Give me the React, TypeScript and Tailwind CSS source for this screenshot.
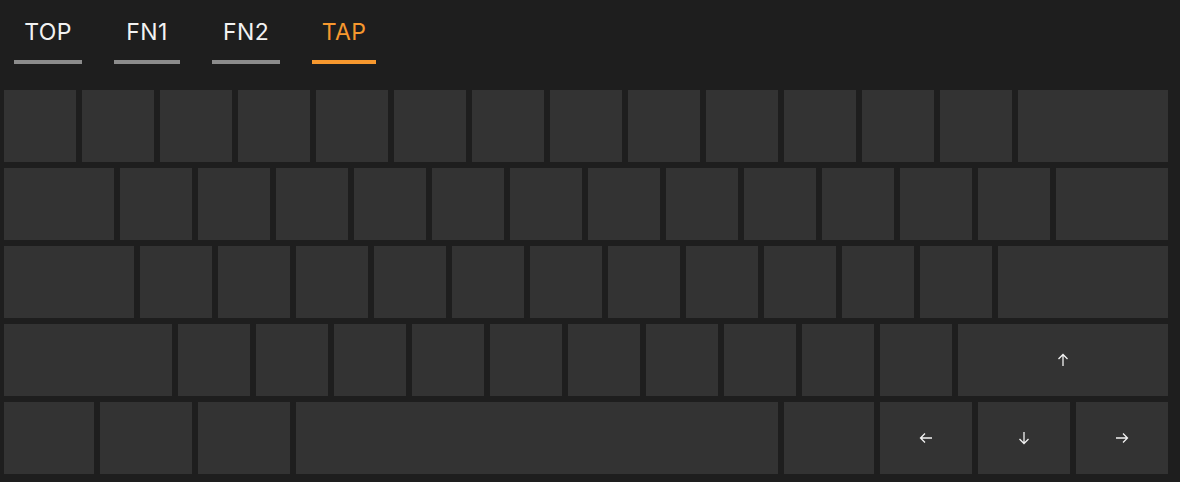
import React from "react"

type Key = { w: number; icon?: "up" | "down" | "left" | "right" }

const rows: Key[][] = [
    [...Array(13).fill({ w: 72 }), { w: 150 }],
    [{ w: 110 }, ...Array(12).fill({ w: 72 }), { w: 112 }],
    [{ w: 130 }, ...Array(11).fill({ w: 72 }), { w: 170 }],
    [{ w: 168 }, ...Array(10).fill({ w: 72 }), { w: 210, icon: "up" }],
    [
        { w: 90 },
        { w: 92 },
        { w: 92 },
        { w: 482 },
        { w: 90 },
        { w: 92, icon: "left" },
        { w: 92, icon: "down" },
        { w: 92, icon: "right" },
    ],
]

const tabs = [
    { label: "TOP", w: 68, active: false },
    { label: "FN1", w: 66, active: false },
    { label: "FN2", w: 68, active: false },
    { label: "TAP", w: 64, active: true },
]

function Arrow({ dir }: { dir: "up" | "down" | "left" | "right" }) {
    const rot = { up: 0, right: 90, down: 180, left: 270 }[dir]
    return (
        <svg width="14" height="14" viewBox="0 0 14 14" style={{ transform: `rotate(${rot}deg)` }}>
            <path d="M7 13V1.5M2.5 6L7 1.5L11.5 6" fill="none" stroke="#f2f2f2" strokeWidth="1.3" />
        </svg>
    )
}

export default function App() {
    return (
        <div className="w-[1180px] h-[482px] bg-[#1e1e1e] overflow-hidden" style={{ fontFamily: "Inter, 'Noto Sans', sans-serif" }}>
            {/* Tabs */}
            <div className="h-[84px] flex gap-[32px] pl-[14px]">
                {tabs.map((t) => (
                    <div key={t.label} className="flex flex-col items-center" style={{ width: t.w }}>
                        <div
                            className={`mt-[18px] h-[28px] leading-[28px] text-[23px] tracking-[0.4px] ${t.active ? "text-[#f7982e]" : "text-[#f2f2f2]"}`}
                        >
                            {t.label}
                        </div>
                        <div className={`mt-[14px] h-[4px] w-full ${t.active ? "bg-[#f7982e]" : "bg-[#8c8c8c]"}`} />
                    </div>
                ))}
            </div>

            {/* Keyboard */}
            <div className="flex flex-col gap-[6px] px-[4px] pt-[6px]">
                {rows.map((row, i) => (
                    <div key={i} className="flex gap-[6px]">
                        {row.map((k, j) => (
                            <div
                                key={j}
                                className="h-[72px] bg-[#333333] flex items-center justify-center"
                                style={{ width: k.w }}
                            >
                                {k.icon && <Arrow dir={k.icon} />}
                            </div>
                        ))}
                    </div>
                ))}
            </div>
        </div>
    )
}
